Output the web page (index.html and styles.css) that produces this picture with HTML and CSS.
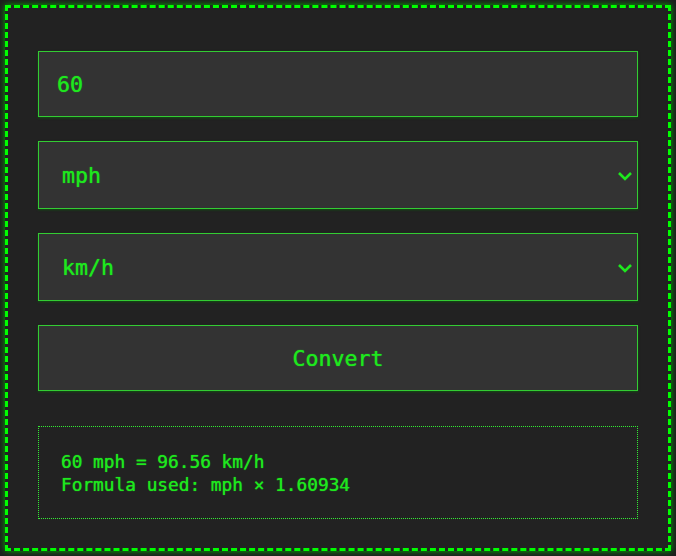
FILE: index.html
```html
<!DOCTYPE html>
<html>
<head>
<meta charset="utf-8">
<link rel="stylesheet" href="styles.css">
</head>
<body>
<div class="app">
  <div class="form">
    <input class="field input" type="text" value="60">
    <div class="select-wrap">
      <select class="field select"><option>mph</option></select>
      <svg class="chev" width="16" height="10" viewBox="0 0 16 10"><path d="M2 2 L8 8 L14 2" fill="none" stroke="#1ee81e" stroke-width="2.6"/></svg>
    </div>
    <div class="select-wrap">
      <select class="field select"><option>km/h</option></select>
      <svg class="chev" width="16" height="10" viewBox="0 0 16 10"><path d="M2 2 L8 8 L14 2" fill="none" stroke="#1ee81e" stroke-width="2.6"/></svg>
    </div>
    <button class="field btn">Convert</button>
    <div class="result">
      <div>60 mph = 96.56 km/h</div>
      <div>Formula used: mph × 1.60934</div>
    </div>
  </div>
</div>
</body>
</html>
```

FILE: styles.css
```css
html, body {
  margin: 0;
  padding: 0;
  background: #1e1e1e;
}
body {
  padding: 5px;
  font-family: "DejaVu Sans Mono", monospace;
  color: #1ee81e;
}
.app {
  height: 546px;
  box-sizing: border-box;
  border: 3px dashed #00ff00;
  background: #222222;
  box-shadow: 0 0 6px #00b000;
  padding: 43px 30px 0;
}
.form {
  width: 600px;
  margin: 0 auto;
  display: flex;
  flex-direction: column;
  gap: 24px;
}
.field {
  display: block;
  width: 100%;
  box-sizing: border-box;
  height: 66px;
  background: #333333;
  border: 1px solid #33cc33;
  color: #1ee81e;
  font-family: "DejaVu Sans Mono", monospace;
  font-size: 21.6px;
  text-shadow: 0 0 1px #1ee81e;
  padding: 0 18px;
  margin: 0;
  outline: none;
  border-radius: 0;
  box-shadow: 0 1px 2px rgba(0, 120, 0, 0.5);
}
.select-wrap {
  position: relative;
  height: 68px;
}
.select {
  height: 68px;
  appearance: none;
  -webkit-appearance: none;
  padding: 0 23px;
}
.chev {
  position: absolute;
  right: 5px;
  top: 30px;
  pointer-events: none;
}
.btn {
  text-align: center;
  height: 66px;
  cursor: pointer;
}
.result {
  margin-top: 11px;
  border: 1px dotted #33ee33;
  padding: 23px 22px 0;
  height: 93px;
  box-sizing: border-box;
  font-size: 17.8px;
  line-height: 23px;
  text-shadow: 0 0 1px #1ee81e;
}
```
